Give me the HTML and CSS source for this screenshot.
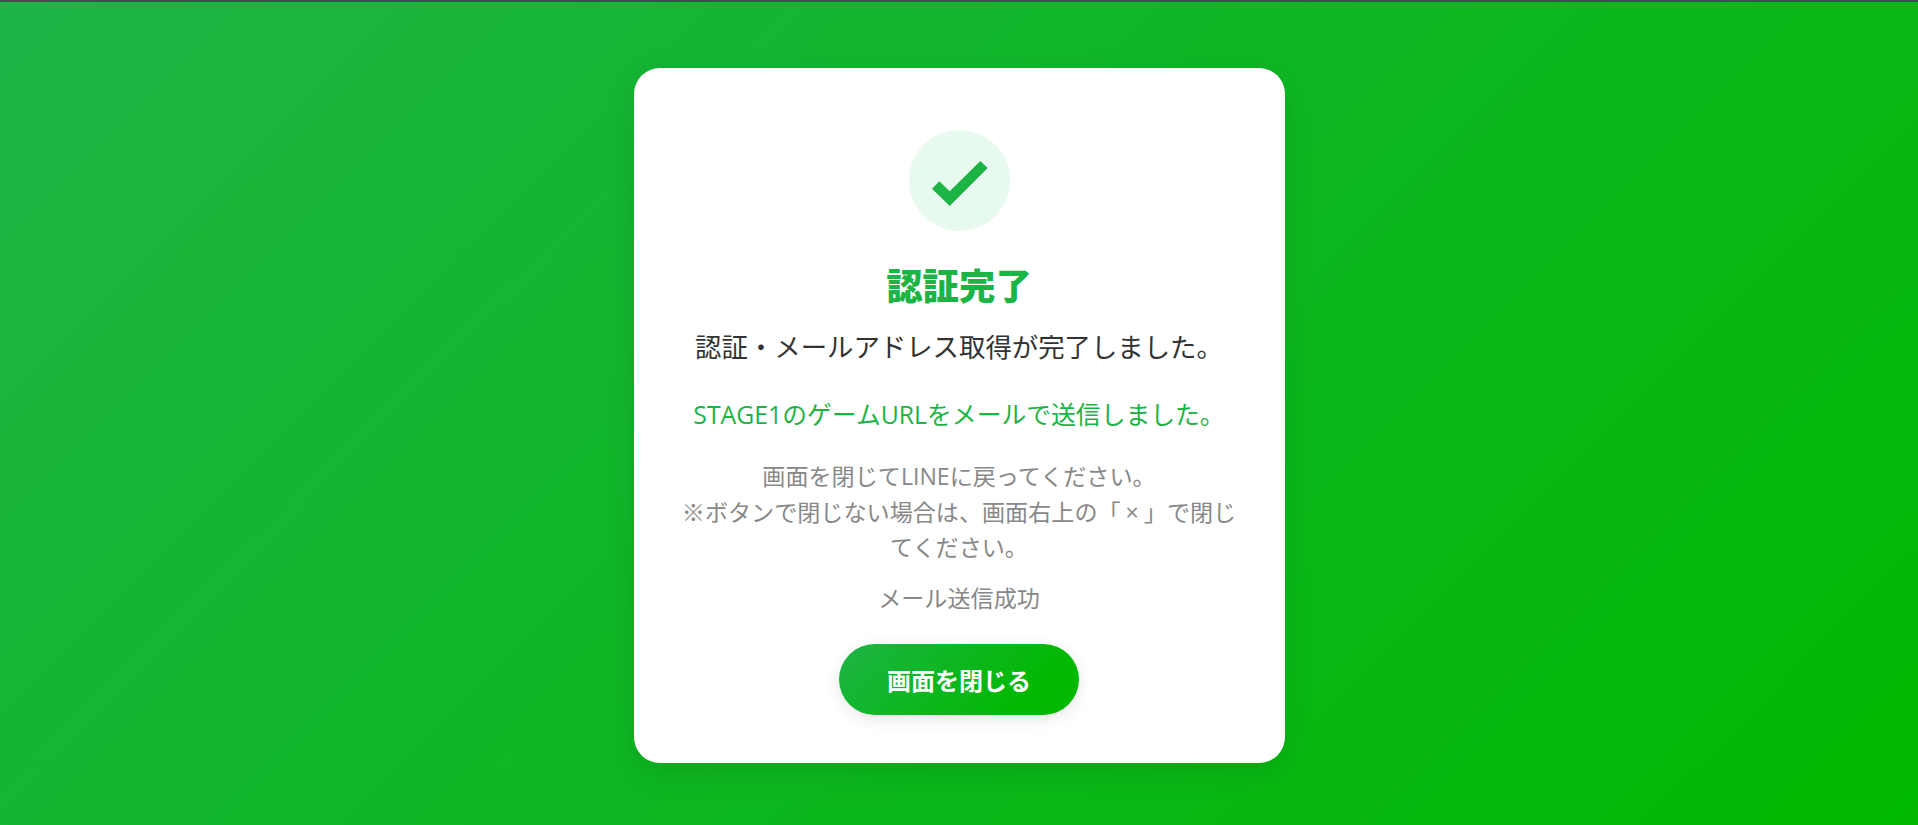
FILE: index.html
```html
<!DOCTYPE html>
<html lang="ja">
<head>
    <meta charset="UTF-8">
    <meta name="viewport" content="width=device-width, initial-scale=1.0">
    <title>認証完了</title>
    <link rel="stylesheet" href="styles.css">
</head>
<body>
    <div class="card">
        <div class="check-circle">
            <svg class="check-icon" viewBox="0 0 56 45" aria-hidden="true">
                <path d="M0 27.7 L7.3 20.3 L17.7 30.3 L48.3 0 L55.7 7 L17.7 45 Z"/>
            </svg>
        </div>
        <h1 class="title">認証完了</h1>
        <p class="message">認証・メールアドレス取得が完了しました。</p>
        <p class="sent">STAGE1のゲームURLをメールで送信しました。</p>
        <p class="note">画面を閉じてLINEに戻ってください。<br>※ボタンで閉じない場合は、画面右上の「<span class="times">×</span>」で閉じ<br>てください。</p>
        <p class="status">メール送信成功</p>
        <button class="close-btn" type="button">画面を閉じる</button>
    </div>
</body>
</html>
```

FILE: styles.css
```css
* {
    box-sizing: border-box;
}

body {
    margin: 0;
    min-height: 100vh;
    padding-top: 4px;
    border-top: 2px solid #4a4a4a;
    font-family: "Open Sans", "Noto Sans CJK JP", sans-serif;
    background: linear-gradient(135deg, #1db446, #00b900);
    display: flex;
    align-items: center;
    justify-content: center;
}

.card {
    width: 651px;
    height: 695px;
    padding: 62px 44px 0;
    background-color: #fff;
    border-radius: 26px;
    box-shadow: 0 10px 30px rgba(0,0,0,0.1);
    display: flex;
    flex-direction: column;
    align-items: center;
    text-align: center;
}

.check-circle {
    width: 101px;
    height: 101px;
    border-radius: 50%;
    background-color: #e8faf0;
    display: flex;
    align-items: center;
    justify-content: center;
    flex-shrink: 0;
}

.check-icon {
    width: 56px;
    height: 45px;
    margin: 5px 0 0 1px;
    fill: #1db446;
}

.title {
    margin: 32px 0 0;
    font-size: 36.4px;
    line-height: 46px;
    font-weight: 900;
    color: #1db446;
}

.message {
    margin: 18px 0 0;
    font-size: 26.4px;
    line-height: 41px;
    color: #333;
}

.sent {
    margin: 26px 0 0;
    font-size: 24.8px;
    line-height: 40px;
    color: #1db446;
}

.note {
    margin: 25px 0 0;
    font-size: 23.1px;
    line-height: 35.5px;
    color: #888;
}

.times {
    margin: 0 5px;
}

.status {
    margin: 14px 0 0;
    font-size: 23.1px;
    line-height: 36px;
    color: #888;
}

.close-btn {
    margin-top: 28px;
    width: 240px;
    height: 71px;
    border: none;
    border-radius: 36px;
    font-family: inherit;
    font-size: 24px;
    font-weight: 700;
    color: #fff;
    background: linear-gradient(135deg, #1db446 0%, #00b900 80%);
    box-shadow: 0 4px 15px rgba(0,0,0,0.1);
}
```
